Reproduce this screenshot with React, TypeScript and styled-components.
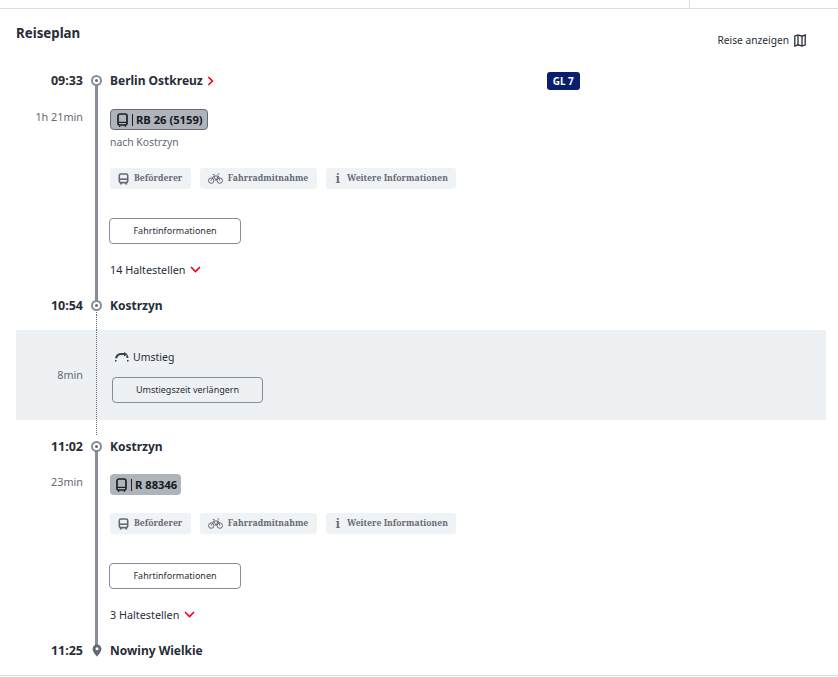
import * as React from 'react';
import styled, { createGlobalStyle } from 'styled-components';

const ink = '#282d37';
const grey = '#646973';
const railColor = '#878c96';
const red = '#ec0016';

const GlobalStyle = createGlobalStyle`
  html, body { margin: 0; background: #fff; }
  body { font-family: "Noto Sans", "Open Sans", sans-serif; color: ${ink}; }
`;

const BusIcon = () => (
  <svg width="11" height="12" viewBox="0 0 11 12" fill="none" stroke="#646973" strokeWidth="1.6">
    <rect x="1.3" y="1" width="8.4" height="8.6" rx="1.6" />
    <path d="M1.3 6.2h8.4" />
    <path d="M2.8 10v1.6M8.2 10v1.6" strokeWidth="1.9" />
  </svg>
);

const BikeIcon = () => (
  <svg width="15" height="11" viewBox="0 0 15 11" fill="none" stroke="#646973" strokeWidth="1">
    <circle cx="3.2" cy="7.6" r="2.7" />
    <circle cx="11.8" cy="7.6" r="2.7" />
    <path d="M3.2 7.6 5.6 3h4.6l1.6 4.6M5.6 3l2.4 4.6 2.2-4.6M9.6 1h1.6M4.8 1.6h1.6" />
  </svg>
);

const TrainIcon = () => (
  <svg width="11" height="14" viewBox="0 0 11 14" fill="none" stroke="#1d1f24" strokeWidth="1.7">
    <path d="M3 1h5a2 2 0 0 1 2 2v7.4a1.6 1.6 0 0 1-1.6 1.6H2.6A1.6 1.6 0 0 1 1 10.4V3a2 2 0 0 1 2-2Z" />
    <path d="M1.4 9.4h8.2" strokeWidth="1.2" />
    <path d="M3 12.6 2.4 14M8 12.6 8.6 14" strokeWidth="1.2" />
  </svg>
);

const MapIcon = () => (
  <svg width="12" height="13" viewBox="0 0 12 13" fill="none" stroke="#282d37" strokeWidth="1.3">
    <path d="M.8 2.2 4 1l4 1.2L11.2 1v9.8L8 12l-4-1.2-3.2 1.2Z" />
    <path d="M4 1v9.8M8 2.2V12" />
  </svg>
);

const TransferIcon = () => (
  <svg width="16" height="10" viewBox="0 0 16 10" fill="none" stroke="#3c414b">
    <path d="M2 6.2C2.8 3.2 4.8 2 7.4 2h3.4" strokeWidth="2.2" />
    <path d="M10 0v4.4l3.6-2.2Z" fill="#3c414b" stroke="none" />
    <path d="M12.6 3.4c.6.6.9 1.4 1 2.6" strokeWidth="1.8" />
    <path d="M1 8.8h1.6M13 8.8h1.6" strokeWidth="1.6" />
  </svg>
);

const ChevronRight = () => (
  <svg width="7" height="10" viewBox="0 0 7 10" fill="none" stroke={red} strokeWidth="1.6">
    <path d="M1.4 1 5.4 5l-4 4" />
  </svg>
);

const ChevronDown = () => (
  <svg width="11" height="7" viewBox="0 0 11 7" fill="none" stroke={red} strokeWidth="1.6">
    <path d="M1 1l4.5 4.5L10 1" />
  </svg>
);

const Page = styled.div`
  width: 838px;
  height: 677px;
  overflow: hidden;
  box-sizing: border-box;
`;

const TopBar = styled.div`
  height: 8px;
  border-bottom: 1px solid #dcdee1;
  display: flex;
  justify-content: flex-end;
`;

const TopDivider = styled.div`
  width: 148px;
  border-left: 1px solid #dcdee1;
`;

const Main = styled.main`
  height: 667px;
  box-sizing: border-box;
  padding: 0 12px 0 16px;
  border-bottom: 1px solid #dcdee1;
`;

const Header = styled.header`
  height: 61px;
  display: flex;
  justify-content: space-between;
  padding-right: 20px;
`;

const Title = styled.h2`
  margin: 14px 0 0;
  font-size: 13.3px;
  line-height: 20px;
  font-weight: 700;
`;

const MapLink = styled.a`
  margin-top: 22px;
  height: 18px;
  display: flex;
  align-items: center;
  gap: 5px;
  font-size: 10.2px;
`;

type RailKind = 'start' | 'through' | 'end' | 'change' | 'dotted' | 'none';

const railBackground: Record<RailKind, string> = {
  none: 'none',
  start: `linear-gradient(${railColor}, ${railColor}) center bottom / 3px 50% no-repeat`,
  through: `linear-gradient(${railColor}, ${railColor}) center / 3px 100% no-repeat`,
  end: `linear-gradient(${railColor}, ${railColor}) center top / 3px 50% no-repeat`,
  change: `linear-gradient(${railColor}, ${railColor}) center top / 3px 50% no-repeat, repeating-linear-gradient(${grey} 0 1px, transparent 1px 2px) center bottom / 1px 50% no-repeat`,
  dotted: `repeating-linear-gradient(${grey} 0 1px, transparent 1px 2px) center / 1px 100% no-repeat`,
};

const Row = styled.div<{ $height?: number; $band?: boolean }>`
  display: grid;
  grid-template-columns: 68px 25px 1fr;
  height: ${(p) => (p.$height ? `${p.$height}px` : 'auto')};
  background: ${(p) => (p.$band ? '#eef1f4' : 'transparent')};
`;

const Rail = styled.div<{ $kind: RailKind }>`
  background: ${(p) => railBackground[p.$kind]};
  display: flex;
  align-items: center;
  justify-content: center;
`;

const Node = styled.span`
  width: 11px;
  height: 11px;
  box-sizing: border-box;
  border: 2px solid ${railColor};
  border-radius: 50%;
  background: #fff;
  display: flex;
  align-items: center;
  justify-content: center;
  &::after {
    content: '';
    width: 3px;
    height: 3px;
    border-radius: 50%;
    background: ${grey};
  }
`;

const Time = styled.div`
  text-align: right;
  font-size: 12.5px;
  line-height: 20px;
  font-weight: 700;
  padding: 1px 1px 0 0;
`;

const Station = styled.div`
  padding: 0 0 0 1px;
  display: flex;
  align-items: center;
  gap: 4px;
  font-size: 12px;
  line-height: 20px;
  font-weight: 700;
`;

const BadgeSlot = styled.div`
  flex: 1;
  padding-left: 329px;
  display: flex;
`;

const Badge = styled.span`
  background: #0a1e6e;
  color: #fff;
  font-size: 10px;
  line-height: 18px;
  height: 18px;
  width: 33px;
  text-align: center;
  border-radius: 3px;
`;

const Duration = styled.div<{ $top: number }>`
  padding: ${(p) => p.$top}px 1px 0 0;
  text-align: right;
  font-size: 10.8px;
  line-height: 16px;
  color: ${grey};
`;

const CenteredDuration = styled(Duration)`
  padding-top: 0;
  align-self: center;
`;

const LegBody = styled.div<{ $top: number }>`
  padding: ${(p) => p.$top}px 0 0 1px;
  display: flex;
  flex-direction: column;
  align-items: flex-start;
`;

const Pill = styled.div<{ $outlined?: boolean }>`
  height: 21px;
  box-sizing: border-box;
  display: flex;
  align-items: center;
  padding: 0 4px 0 6px;
  gap: 3.5px;
  border-radius: 4px;
  background: #afb4bb;
  border: ${(p) => (p.$outlined ? `1px solid ${grey}` : 'none')};
  font-size: 11.2px;
  font-weight: 700;
  color: #131821;
`;

const PillBar = styled.span`
  width: 1px;
  height: 12px;
  background: #1d1f24;
`;

const Direction = styled.div`
  margin-top: 4px;
  font-size: 10.4px;
  line-height: 16px;
  color: ${grey};
`;

const Chips = styled.div`
  margin-top: 18px;
  display: flex;
  gap: 9px;
`;

const Chip = styled.div`
  height: 21px;
  box-sizing: border-box;
  display: flex;
  align-items: center;
  gap: 5px;
  padding: 0 8.5px 2px 8px;
  border-radius: 3px;
  background: #f0f3f5;
  color: ${grey};
  font-family: "Noto Serif", "DejaVu Serif", "Noto Sans", sans-serif;
  font-size: 8.6px;
  font-weight: 700;
  svg {
    margin-top: 2px;
  }
`;

const InfoMark = styled.span`
  font-size: 12px;
  line-height: 12px;
  padding: 2px 2px 0;
`;

const OutlineButton = styled.button<{ $width: number }>`
  width: ${(p) => p.$width}px;
  height: 26px;
  box-sizing: border-box;
  background: transparent;
  border: 1px solid ${railColor};
  border-radius: 4px;
  font-family: inherit;
  font-size: 9px;
  color: ${ink};
  padding: 0 0 2px;
`;

const InfoButton = styled(OutlineButton)`
  margin: 29px 0 0 -1px;
`;

const Stops = styled.div`
  margin-top: 16px;
  height: 18px;
  display: flex;
  align-items: center;
  gap: 5px;
  font-size: 10.8px;
`;

const TransferBody = styled.div`
  padding: 18px 0 0 3px;
`;

const TransferLabel = styled.div`
  height: 18px;
  display: flex;
  align-items: center;
  gap: 3px;
  padding-left: 2px;
  font-size: 10.5px;
`;

const TransferButton = styled(OutlineButton)`
  margin-top: 11px;
`;

const Leg = ({
  duration,
  line,
  direction,
  stops,
  durationTop,
  bodyTop,
  height,
}: {
  duration: string;
  line: string;
  direction?: string;
  stops: string;
  durationTop: number;
  bodyTop: number;
  height: number;
}) => (
  <Row $height={height}>
    <Duration $top={durationTop}>{duration}</Duration>
    <Rail $kind="through" />
    <LegBody $top={bodyTop}>
      <Pill $outlined={Boolean(direction)}>
        <TrainIcon />
        <PillBar />
        {line}
      </Pill>
      {direction && <Direction>{direction}</Direction>}
      <Chips>
        <Chip>
          <BusIcon />
          Beförderer
        </Chip>
        <Chip>
          <BikeIcon />
          Fahrradmitnahme
        </Chip>
        <Chip>
          <InfoMark>i</InfoMark>
          Weitere Informationen
        </Chip>
      </Chips>
      <InfoButton $width={132}>Fahrtinformationen</InfoButton>
      <Stops>
        {stops}
        <ChevronDown />
      </Stops>
    </LegBody>
  </Row>
);

export default function App() {
  return (
    <Page>
      <GlobalStyle />
      <TopBar>
        <TopDivider />
      </TopBar>
      <Main>
        <Header>
          <Title>Reiseplan</Title>
          <MapLink>
            Reise anzeigen
            <MapIcon />
          </MapLink>
        </Header>
        <Row $height={20}>
          <Time>09:33</Time>
          <Rail $kind="start">
            <Node />
          </Rail>
          <Station>
            Berlin Ostkreuz
            <ChevronRight />
            <BadgeSlot>
              <Badge>GL 7</Badge>
            </BadgeSlot>
          </Station>
        </Row>
        <Leg
          duration="1h 21min"
          line="RB 26 (5159)"
          direction="nach Kostrzyn"
          stops="14 Haltestellen"
          durationTop={19}
          bodyTop={19}
          height={205}
        />
        <Row $height={20}>
          <Time>10:54</Time>
          <Rail $kind="change">
            <Node />
          </Rail>
          <Station>Kostrzyn</Station>
        </Row>
        <Row $height={15}>
          <div />
          <Rail $kind="dotted" />
        </Row>
        <Row $height={90} $band>
          <CenteredDuration $top={0}>8min</CenteredDuration>
          <Rail $kind="dotted" />
          <TransferBody>
            <TransferLabel>
              <TransferIcon />
              Umstieg
            </TransferLabel>
            <TransferButton $width={151}>Umstiegszeit verlängern</TransferButton>
          </TransferBody>
        </Row>
        <Row $height={16}>
          <div />
          <Rail $kind="dotted" />
        </Row>
        <Row $height={20}>
          <Time>11:02</Time>
          <Rail $kind="start">
            <Node />
          </Rail>
          <Station>Kostrzyn</Station>
        </Row>
        <Leg
          duration="23min"
          line="R 88346"
          stops="3 Haltestellen"
          durationTop={18}
          bodyTop={18}
          height={184}
        />
        <Row $height={20}>
          <Time>11:25</Time>
          <Rail $kind="end">
            <svg width="10" height="13" viewBox="0 0 10 13">
              <path
                d="M5 .5a4.4 4.4 0 0 0-4.4 4.4c0 3 4.4 7.6 4.4 7.6s4.4-4.6 4.4-7.6A4.4 4.4 0 0 0 5 .5Z"
                fill="#646973"
              />
              <circle cx="5" cy="4.8" r="1.5" fill="#fff" />
            </svg>
          </Rail>
          <Station>Nowiny Wielkie</Station>
        </Row>
      </Main>
    </Page>
  );
}
